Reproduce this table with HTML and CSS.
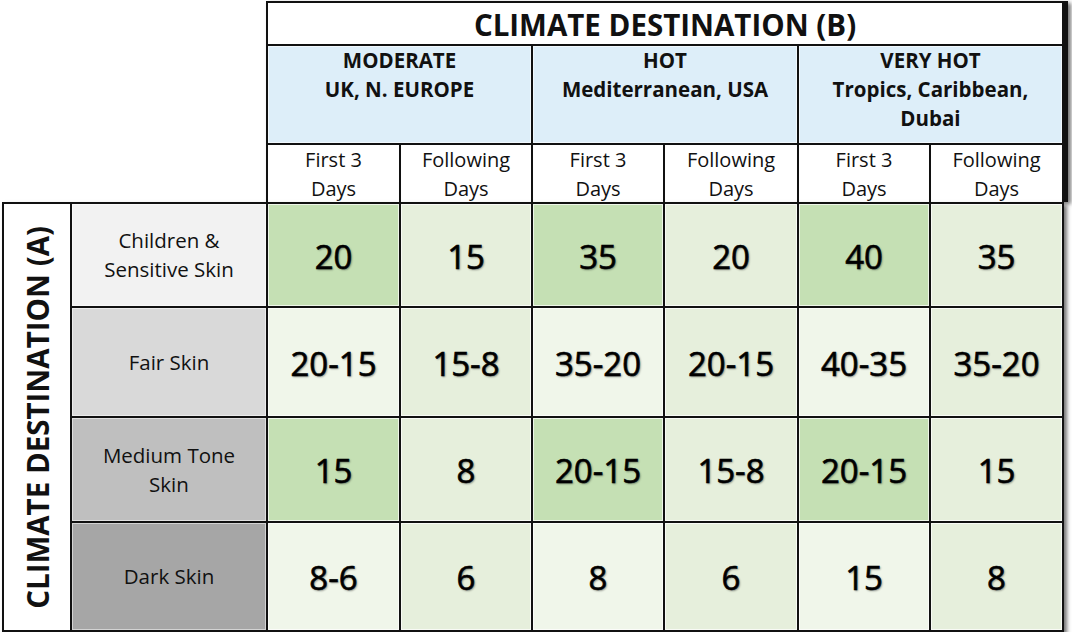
FILE: index.html
```html
<!DOCTYPE html>
<html>
<head>
<meta charset="utf-8">
<link rel="stylesheet" href="styles.css">
<title>Climate Destination</title>
</head>
<body>
<div class="sheet">
  <div class="head">
    <div class="title">CLIMATE DESTINATION (B)</div>
    <div class="zone">MODERATE<br>UK, N. EUROPE</div>
    <div class="zone">HOT<br>Mediterranean, USA</div>
    <div class="zone">VERY HOT<br>Tropics, Caribbean,<br>Dubai</div>
    <div class="day">First 3<br>Days</div>
    <div class="day">Following<br>Days</div>
    <div class="day">First 3<br>Days</div>
    <div class="day">Following<br>Days</div>
    <div class="day">First 3<br>Days</div>
    <div class="day">Following<br>Days</div>
  </div>
  <div class="body">
    <div class="side"><span>CLIMATE DESTINATION (A)</span></div>

    <div class="label l1">Children &amp;<br>Sensitive Skin</div>
    <div class="num dark">20</div>
    <div class="num light">15</div>
    <div class="num dark">35</div>
    <div class="num light">20</div>
    <div class="num dark">40</div>
    <div class="num light">35</div>

    <div class="label l2">Fair Skin</div>
    <div class="num pale">20-15</div>
    <div class="num light">15-8</div>
    <div class="num pale">35-20</div>
    <div class="num light">20-15</div>
    <div class="num pale">40-35</div>
    <div class="num light">35-20</div>

    <div class="label l3">Medium Tone<br>Skin</div>
    <div class="num dark">15</div>
    <div class="num light">8</div>
    <div class="num dark">20-15</div>
    <div class="num light">15-8</div>
    <div class="num dark">20-15</div>
    <div class="num light">15</div>

    <div class="label l4">Dark Skin</div>
    <div class="num pale">8-6</div>
    <div class="num light">6</div>
    <div class="num pale">8</div>
    <div class="num light">6</div>
    <div class="num pale">15</div>
    <div class="num light">8</div>
  </div>
</div>
</body>
</html>
```

FILE: styles.css
```css
html, body {
  margin: 0;
  padding: 0;
  background: #ffffff;
}

body {
  font-family: "Open Sans", "Noto Sans", sans-serif;
  color: #111;
}

.sheet {
  display: flex;
  flex-direction: column;
  padding: 0 0 0 2px;
  width: 1070px;
}

.head {
  margin-top: 1px;
  margin-left: 264px;
  display: grid;
  grid-template-columns: 131px 130px 130px 132px 130px 131px;
  grid-template-rows: 41px 97px 57px;
  gap: 2px;
  padding: 2px 2px 0 2px;
  background: #111;
  width: 798px;
  box-shadow: 3px 2px 4px rgba(0, 0, 0, 0.55);
}

.title {
  grid-column: 1 / 7;
  background: #fff;
  display: flex;
  align-items: center;
  justify-content: center;
  font-weight: 700;
  font-size: 29.5px;
  padding-top: 2px;
}

.zone {
  grid-column: span 2;
  background: #ddeef9;
  text-align: center;
  font-weight: 700;
  font-size: 20.5px;
  line-height: 29px;
  box-shadow: inset 0 0 0 1px rgba(255, 255, 255, 0.6);
}

.day {
  background: #fff;
  text-align: center;
  font-size: 20px;
  line-height: 29px;
}

.body {
  display: grid;
  grid-template-columns: 66px 194px 131px 130px 130px 132px 130px 131px;
  grid-template-rows: 102px 108px 103px 107px;
  gap: 2px;
  padding: 2px;
  background: #111;
  width: 1058px;
  box-shadow: 3px 3px 4px rgba(0, 0, 0, 0.55);
}

.side {
  grid-row: 1 / 5;
  background: #fff;
  display: flex;
  align-items: center;
  justify-content: center;
}

.side span {
  writing-mode: vertical-rl;
  transform: rotate(180deg);
  font-weight: 700;
  font-size: 29.5px;
  white-space: nowrap;
}

.label {
  display: flex;
  align-items: center;
  justify-content: center;
  text-align: center;
  font-size: 20.5px;
  line-height: 29px;
  box-shadow: inset 0 0 0 1px rgba(255, 255, 255, 0.5);
}

.l1 { background: #f2f2f2; }
.l2 { background: #d9d9d9; }
.l3 { background: #bfbfbf; }
.l4 { background: #a6a6a6; }

.num {
  display: flex;
  align-items: center;
  justify-content: center;
  font-size: 33px;
  color: #000;
  padding-top: 2px;
  -webkit-text-stroke: 0.6px #000;
  text-shadow: 1px 1px 2px rgba(0, 0, 0, 0.45);
  box-shadow: inset 0 0 0 1px rgba(255, 255, 255, 0.7);
}

.dark { background: #c5e0b4; }
.light { background: #e6efdc; }
.pale { background: #f0f6ea; }
```
